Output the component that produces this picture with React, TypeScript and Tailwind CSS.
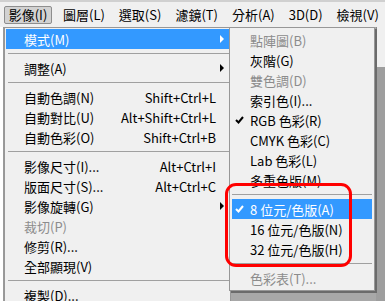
import React from 'react';

type Item =
  | { sep: true }
  | { label: string; shortcut?: string; arrow?: boolean; disabled?: boolean; active?: boolean; checked?: boolean };

const mainItems: Item[] = [
  { label: '模式(M)', arrow: true, active: true },
  { sep: true },
  { label: '調整(A)', arrow: true },
  { sep: true },
  { label: '自動色調(N)', shortcut: 'Shift+Ctrl+L' },
  { label: '自動對比(U)', shortcut: 'Alt+Shift+Ctrl+L' },
  { label: '自動色彩(O)', shortcut: 'Shift+Ctrl+B' },
  { sep: true },
  { label: '影像尺寸(I)...', shortcut: 'Alt+Ctrl+I' },
  { label: '版面尺寸(S)...', shortcut: 'Alt+Ctrl+C' },
  { label: '影像旋轉(G)', arrow: true },
  { label: '裁切(P)', disabled: true },
  { label: '修剪(R)...' },
  { label: '全部顯現(V)' },
  { sep: true },
  { label: '複製(D)...' },
];

const modeItems: Item[] = [
  { label: '點陣圖(B)', disabled: true },
  { label: '灰階(G)' },
  { label: '雙色調(D)', disabled: true },
  { label: '索引色(I)...' },
  { label: 'RGB 色彩(R)', checked: true },
  { label: 'CMYK 色彩(C)' },
  { label: 'Lab 色彩(L)' },
  { label: '多重色版(M)' },
  { sep: true },
  { label: '8 位元/色版(A)', checked: true, active: true },
  { label: '16 位元/色版(N)' },
  { label: '32 位元/色版(H)' },
  { sep: true },
  { label: '色彩表(T)...', disabled: true },
];

const font = { fontFamily: '"Noto Sans CJK TC", "Liberation Sans", sans-serif' };

function Check({ white }: { white?: boolean }) {
  return (
    <svg width="9" height="8" viewBox="0 0 9 8" className="absolute left-[3px] top-[6px]">
      <path d="M1 4 L3.5 6.5 L8 1" fill="none" stroke={white ? '#fff' : '#000'} strokeWidth="2" />
    </svg>
  );
}

function MenuList({ items, sepClass }: { items: Item[]; sepClass: string }) {
  return (
    <>
      {items.map((it, i) =>
        'sep' in it ? (
          <div key={i} className="h-[9px] flex items-center">
            <div className={`h-px bg-[#a0a0a0] ${sepClass}`} />
          </div>
        ) : (
          <div
            key={i}
            className={`relative h-[20px] flex items-center pl-[18px] pr-[13px] text-[13px] leading-none ${
              it.active ? 'bg-[#3399ff] text-white' : it.disabled ? 'text-[#8c8c8c]' : 'text-black'
            }`}
          >
            {it.checked && <Check white={it.active} />}
            <span className="whitespace-nowrap">{it.label}</span>
            {it.shortcut && <span className="ml-auto whitespace-nowrap">{it.shortcut}</span>}
            {it.arrow && (
              <span
                className={`absolute right-[5px] top-[6px] w-0 h-0 border-y-[4px] border-y-transparent border-l-[4px] ${
                  it.active ? 'border-l-white' : 'border-l-black'
                }`}
              />
            )}
          </div>
        )
      )}
    </>
  );
}

export default function App() {
  const bar = ['圖層(L)', '選取(S)', '濾鏡(T)', '分析(A)', '3D(D)', '檢視(V)'];
  return (
    <div className="relative w-[385px] h-[301px] overflow-hidden bg-[#a8a8a8]" style={font}>
      {/* menu bar */}
      <div className="h-[27px] bg-[#f0f0f0] border-t-2 border-[#d0d0d0] flex items-center text-[13px] leading-none text-black whitespace-nowrap">
        <div className="ml-[4px] w-[48px] h-[18px] flex items-center justify-center bg-[#d2d2d2] border border-[#8e8e8e] rounded-[2px]">
          影像(I)
        </div>
        <div className="flex items-center gap-[14px] ml-[11px]">
          {bar.map((b) => (
            <span key={b}>{b}</span>
          ))}
        </div>
      </div>

      {/* app area behind menus */}
      <div className="flex h-[274px]">
        <div className="w-[4px] bg-white border-r border-[#9a9a9a]" />
        <div className="flex-1" />
        <div className="w-[9px] flex flex-col">
          <div className="h-[40px] bg-[#f0f0f0] border-l border-[#8a8a8a]" />
          <div className="flex-1 bg-[#9e9e9e]" />
        </div>
      </div>

      {/* image menu */}
      <div className="absolute left-[4px] top-[27px] w-[227px] h-[290px] bg-[#f0f0f0] border border-[#979797] p-px">
        <MenuList items={mainItems} sepClass="ml-[2px] w-full" />
      </div>

      {/* mode submenu */}
      <div className="absolute left-[229px] top-[27px] w-[146px] bg-[#f0f0f0] border border-[#979797] p-[2px] shadow-[2px_2px_0_#6b6b6b]">
        <MenuList items={modeItems} sepClass="w-full" />
      </div>

      {/* annotation */}
      <div className="absolute left-[225px] top-[183px] w-[127px] h-[84px] border-[3px] border-[#ff0000] rounded-[11px]" />
    </div>
  );
}
